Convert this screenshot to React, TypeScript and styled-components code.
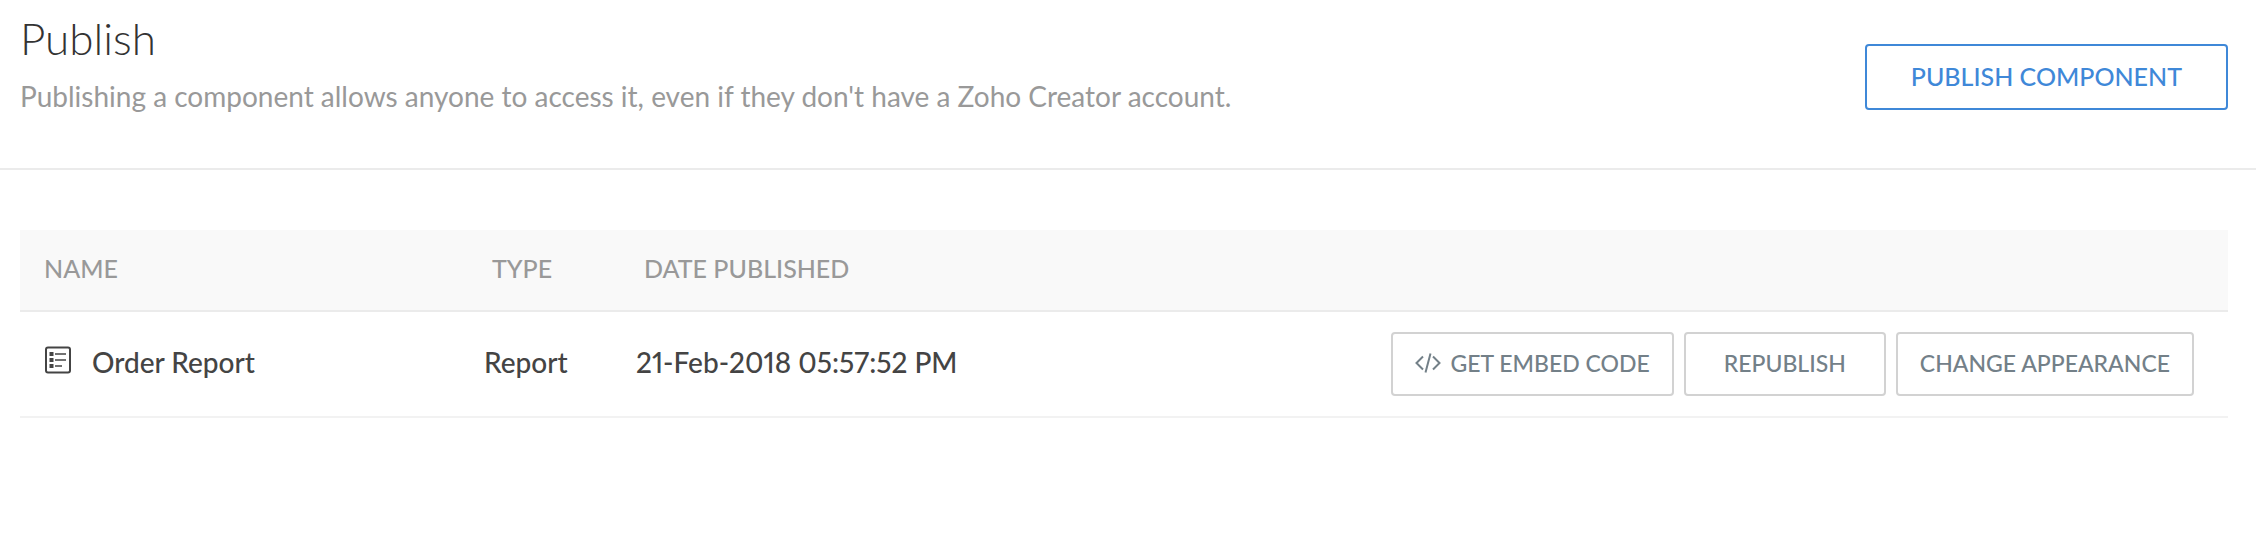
import React from "react";
import styled, { createGlobalStyle } from "styled-components";

const GlobalStyle = createGlobalStyle`
  *, *::before, *::after { box-sizing: border-box; }
  body {
    margin: 0;
    background: #ffffff;
    color: #444444;
    font-family: Lato, "Open Sans", sans-serif;
    font-size: 28px;
    line-height: 36px;
  }
`;

const Header = styled.header`
  display: flex;
  justify-content: space-between;
  align-items: flex-start;
  padding: 10px 28px 54px 20px;
  border-bottom: 2px solid #ebebeb;
`;

const Title = styled.h1`
  margin: 0;
  color: #333333;
  font-size: 44px;
  font-weight: 300;
  line-height: 56px;
`;

const Description = styled.p`
  margin: 12px 0 0;
  color: #999999;
`;

const Button = styled.button`
  display: inline-flex;
  align-items: center;
  justify-content: center;
  gap: 10px;
  height: 64px;
  padding: 0 22px 2px;
  border: 2px solid #d2d2d2;
  border-radius: 4px;
  background: #ffffff;
  color: #738088;
  font-family: inherit;
  font-size: 23px;
  font-weight: 500;
  line-height: 32px;
  white-space: nowrap;
  cursor: pointer;
`;

const PublishButton = styled(Button)`
  height: 66px;
  margin-top: 34px;
  padding: 0 44px 2px;
  border-color: #3f88d8;
  color: #3f88d8;
  font-size: 25px;
`;

const RepublishButton = styled(Button)`
  padding: 0 38px 2px;
`;

const Content = styled.main`
  padding: 60px 28px 60px 20px;
`;

const Table = styled.table`
  width: 100%;
  border-collapse: separate;
  border-spacing: 0;
  table-layout: fixed;
`;

const Column = styled.col<{ $width?: number }>`
  width: ${({ $width }) => ($width ? `${$width}px` : "auto")};
`;

const HeadCell = styled.th`
  height: 82px;
  padding: 0 0 4px 32px;
  border-bottom: 2px solid #ebebeb;
  background: #f9f9f9;
  color: #999999;
  font-size: 25px;
  font-weight: 500;
  text-align: left;
  white-space: nowrap;

  &:first-child { padding-left: 24px; }
`;

const Cell = styled.td`
  height: 106px;
  padding: 0 0 4px 24px;
  border-bottom: 2px solid #f2f2f2;
  font-weight: 500;
  font-variant-numeric: proportional-nums;
  white-space: nowrap;
`;

const ActionCell = styled(Cell)`
  padding: 0 34px 0 0;
`;

const NameGroup = styled.div`
  display: flex;
  align-items: center;
  gap: 20px;
`;

const Actions = styled.div`
  display: flex;
  justify-content: flex-end;
  gap: 10px;
`;

const Icon = styled.svg`
  display: block;
  flex: none;
`;

const ReportIcon = () => (
  <Icon width="28" height="32" viewBox="0 0 28 32" fill="none" aria-hidden="true">
    <rect x="2" y="1.5" width="24" height="25" rx="2" stroke="#444444" strokeWidth="2" />
    <path d="M5.5 6h4v4h-4zM5.5 12h4v4h-4zM5.5 18h4v4h-4z" fill="#444444" />
    <path d="M11 8h11M11 14h11M11 20h7" stroke="#444444" strokeWidth="1.6" />
  </Icon>
);

const CodeIcon = () => (
  <Icon width="26" height="20" viewBox="0 0 26 20" fill="none" stroke="#738088" strokeWidth="2" aria-hidden="true">
    <path d="M8 3.5 1.5 10 8 16.5M18 3.5 24.5 10 18 16.5M15.5 0.5 10.5 19.5" />
  </Icon>
);

export default function App() {
  return (
    <>
      <GlobalStyle />
      <Header>
        <div>
          <Title>Publish</Title>
          <Description>
            Publishing a component allows anyone to access it, even if they don't have a Zoho Creator account.
          </Description>
        </div>
        <PublishButton type="button">PUBLISH COMPONENT</PublishButton>
      </Header>
      <Content>
        <Table>
          <colgroup>
            <Column $width={440} />
            <Column $width={152} />
            <Column $width={400} />
            <Column />
          </colgroup>
          <thead>
            <tr>
              <HeadCell scope="col">NAME</HeadCell>
              <HeadCell scope="col">TYPE</HeadCell>
              <HeadCell scope="col">DATE PUBLISHED</HeadCell>
              <HeadCell as="td" />
            </tr>
          </thead>
          <tbody>
            <tr>
              <Cell>
                <NameGroup>
                  <ReportIcon />
                  Order Report
                </NameGroup>
              </Cell>
              <Cell>Report</Cell>
              <Cell>21-Feb-2018 05:57:52 PM</Cell>
              <ActionCell>
                <Actions>
                  <Button type="button">
                    <CodeIcon />
                    GET EMBED CODE
                  </Button>
                  <RepublishButton type="button">REPUBLISH</RepublishButton>
                  <Button type="button">CHANGE APPEARANCE</Button>
                </Actions>
              </ActionCell>
            </tr>
          </tbody>
        </Table>
      </Content>
    </>
  );
}
